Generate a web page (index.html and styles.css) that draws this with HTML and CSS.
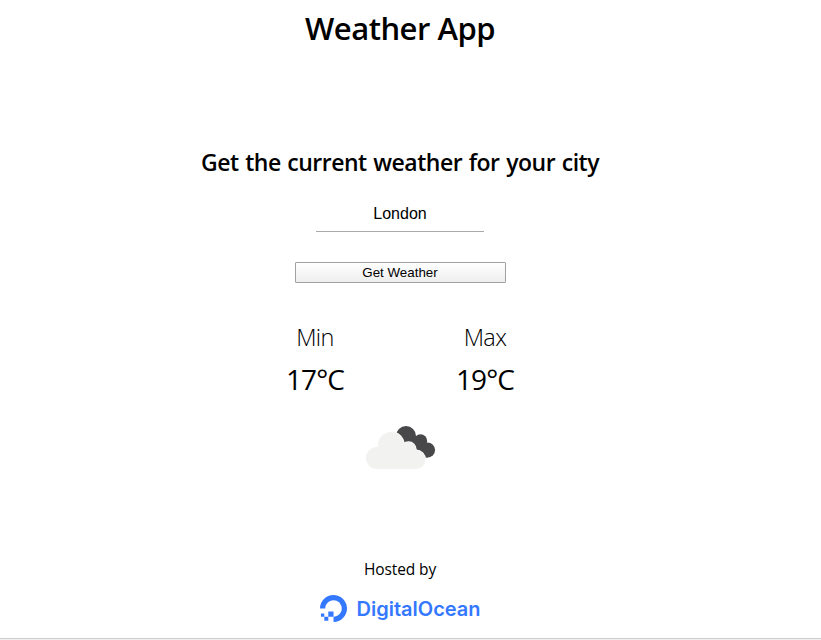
FILE: index.html
```html
<!DOCTYPE html>
<html lang="en">
<head>
<meta charset="utf-8">
<title>Weather App</title>
<link rel="stylesheet" href="styles.css">
</head>
<body>
<main class="app">
  <h1 class="title">Weather App</h1>
  <h2 class="subtitle">Get the current weather for your city</h2>
  <form class="search">
    <input class="city" type="text" value="London" aria-label="City">
    <button class="submit" type="button">Get Weather</button>
  </form>
  <section class="temps">
    <div class="temp"><span class="label">Min</span><span class="value">17°C</span></div>
    <div class="temp"><span class="label">Max</span><span class="value">19°C</span></div>
  </section>
  <svg class="cloud" viewBox="0 0 80 55" width="80" height="55" aria-hidden="true">
    <g fill="#48484a"><circle cx="46" cy="16" r="10"/><circle cx="60.500" cy="21" r="6.700"/><circle cx="67.500" cy="30" r="7.600"/><path d="M46 10l15 10 7 17.600h-8L38 20z"/></g>
    <g fill="#fff"><circle cx="31" cy="25" r="13.700"/><circle cx="48.500" cy="29.500" r="8.200"/><circle cx="56" cy="39.500" r="10"/></g>
    <g fill="#f2f2f0"><circle cx="17" cy="38" r="11"/><circle cx="31" cy="25" r="13"/><circle cx="48.500" cy="29.500" r="7.500"/><circle cx="56" cy="39.500" r="9.500"/><path d="M17 30l14-10 17 5 7 8v16H17z"/></g>
  </svg>
</main>
<footer class="footer">
  <p class="hosted">Hosted by</p>
  <div class="brand">
    <svg class="mark" viewBox="0 0 24 24" width="27" height="27" aria-hidden="true"><path fill="#3478ff" d="M12.04 0C5.408-.02.005 5.37.005 11.992h4.638c0-4.923 4.882-8.731 10.064-6.855a6.95 6.95 0 014.147 4.148c1.889 5.177-1.924 10.055-6.84 10.064v-4.61H7.391v4.623h4.61V24c7.86 0 13.967-7.588 11.397-15.83-1.115-3.59-3.985-6.446-7.575-7.575A12.8 12.8 0 0012.039 0zM7.39 19.362H3.828v3.564H7.39zm-3.563 0v-2.978H.85v2.978z"/></svg>
    <span class="name">DigitalOcean</span>
  </div>
</footer>
</body>
</html>
```
FILE: styles.css
```css
* { box-sizing: border-box; }
body {
  margin: 0;
  height: 640px;
  overflow: hidden;
  display: flex;
  flex-direction: column;
  background: #fff;
  color: #000;
  font-family: "Open Sans", "Noto Sans", sans-serif;
}
.app, .footer {
  width: 800px;
  display: flex;
  flex-direction: column;
  align-items: center;
}
.title {
  margin: 7px 0 0;
  font-size: 31px;
  line-height: 43px;
  font-weight: 600;
  letter-spacing: -0.5px;
  white-space: nowrap;
}
.subtitle {
  margin: 96px 0 0;
  font-size: 23px;
  line-height: 33px;
  font-weight: 600;
  letter-spacing: -0.5px;
  word-spacing: 1.2px;
  white-space: nowrap;
}
.search {
  display: flex;
  flex-direction: column;
  align-items: center;
  margin-top: 16px;
}
.city {
  width: 168px;
  height: 37px;
  padding: 1px 0 0;
  border: 0;
  border-bottom: 1px solid #a9a9a9;
  background: none;
  text-align: center;
  font: 16px/36px "Liberation Sans", sans-serif;
}
.submit {
  width: 211px;
  height: 21px;
  margin-top: 30px;
  padding: 0;
  border: 1px solid #a0a0a0;
  border-radius: 1px;
  background: linear-gradient(#fff, #eee);
  color: #000;
  font: 13.333px/19px "Liberation Sans", sans-serif;
}
.temps {
  display: flex;
  margin-top: 38px;
}
.temp {
  width: 170px;
  display: flex;
  flex-direction: column;
  align-items: center;
}
.label {
  font-size: 23.5px;
  line-height: 32px;
  font-weight: 300;
  letter-spacing: -0.6px;
}
.value {
  margin-top: 7px;
  font-size: 28px;
  line-height: 38px;
  letter-spacing: -0.9px;
}
.cloud { margin-top: 22px; }
.footer {
  width: 100%;
  height: 83px;
  margin-top: auto;
  padding-right: 21px;
  border-bottom: 1px solid #f0f0f0;
  box-shadow: inset 0 -1px #ccc;
}
.hosted {
  margin: 0;
  font-size: 15.5px;
  line-height: 24px;
  letter-spacing: -0.1px;
}
.brand {
  display: flex;
  align-items: center;
  gap: 9px;
  height: 27px;
  margin-top: 14px;
  padding-left: 1px;
  color: #3478ff;
}
.name {
  padding-top: 2px;
  font-family: Inter, sans-serif;
  font-size: 20px;
  line-height: 27px;
  font-weight: 600;
}
```
